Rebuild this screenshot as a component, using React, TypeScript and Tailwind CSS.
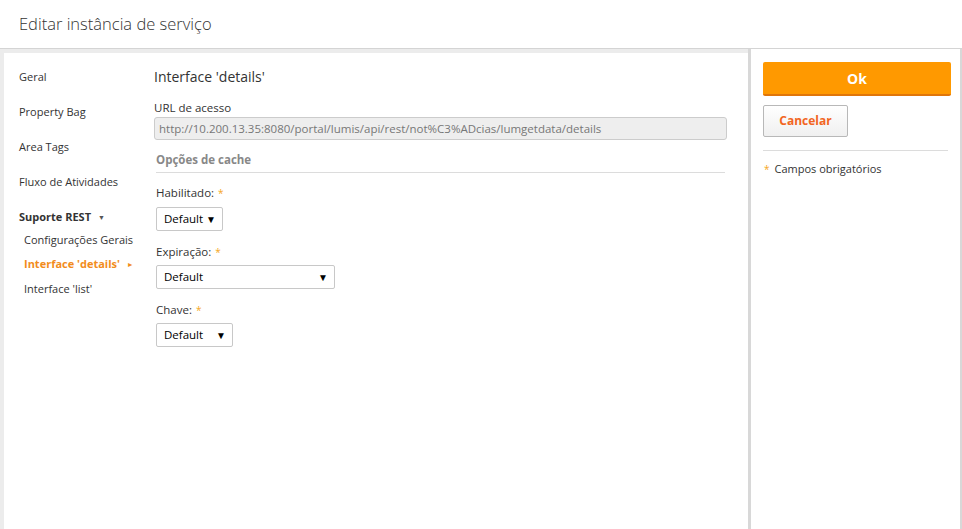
import React from 'react';

const font = { fontFamily: '"Open Sans", "Noto Sans", Arial, sans-serif' };

const Req = () => <span className="text-[#f5a623] text-[10px] align-top ml-1">*</span>;

const Select: React.FC<{ w: string }> = ({ w }) => (
  <div className={`${w} h-[24px] border border-[#c8c8c8] rounded-[2px] bg-white flex items-center justify-between pl-[7px] pr-[6px] text-[11.5px] text-black`}>
    <span>Default</span>
    <span className="text-[10px] leading-none">▼</span>
  </div>
);

const navItems = ['Geral', 'Property Bag', 'Area Tags', 'Fluxo de Atividades'];

export default function App() {
  return (
    <div className="w-[962px] h-[529px] flex flex-col bg-[#ececec] overflow-hidden" style={font}>
      <header className="h-[49px] bg-white border-b border-[#d4d4d4] flex items-center pl-[19px] shrink-0">
        <h1 className="text-[16.5px] text-[#333] font-light">Editar instância de serviço</h1>
      </header>
      <div className="flex flex-1 min-h-0">
        <div className="w-[748px] pl-[4px] pt-[4px] flex">
          <div className="flex-1 bg-white flex">
            <nav className="w-[150px] pl-[15px] pt-[15px] text-[11px] text-[#333]">
              {navItems.map((n) => (
                <div key={n} className="h-[35px] leading-[18px]">{n}</div>
              ))}
              <div className="h-[23px] leading-[18px] font-bold">
                Suporte REST <span className="text-[7px] font-normal text-[#555] ml-[4px] align-middle">▼</span>
              </div>
              <div className="pl-[5px]">
                <div className="h-[24px] leading-[18px]">Configurações Gerais</div>
                <div className="h-[25px] leading-[18px] font-bold text-[#f28c1c]">
                  Interface 'details' <span className="text-[7px] ml-[4px] align-middle">►</span>
                </div>
                <div className="h-[24px] leading-[18px]">Interface 'list'</div>
              </div>
            </nav>
            <main className="flex-1 pt-[14px] pr-[21px] text-[#333]">
              <h2 className="text-[14px] font-normal leading-[20px]">Interface 'details'</h2>
              <div className="mt-[13px] text-[11.5px] leading-[16px]">URL de acesso</div>
              <div className="mt-[1px] h-[23px] bg-[#eeeeee] border border-[#cccccc] rounded-[3px] flex items-center pl-[4px] text-[11.5px] text-[#777]">
                http://10.200.13.35:8080/portal/lumis/api/rest/not%C3%ADcias/lumgetdata/details
              </div>
              <div className="mt-[11px] ml-[2px] mr-[2px] pb-[3px] border-b border-[#dcdcdc] text-[11.5px] font-bold text-[#888] leading-[18px]">
                Opções de cache
              </div>
              <div className="pl-[2px]">
                <div className="mt-[11px] text-[11.5px] leading-[18px]">Habilitado:<Req /></div>
                <div className="mt-[5px]"><Select w="w-[67px]" /></div>
                <div className="mt-[12px] text-[11.5px] leading-[18px]">Expiração:<Req /></div>
                <div className="mt-[4px]"><Select w="w-[179px]" /></div>
                <div className="mt-[12px] text-[11.5px] leading-[18px]">Chave:<Req /></div>
                <div className="mt-[4px]"><Select w="w-[77px]" /></div>
              </div>
            </main>
          </div>
        </div>
        <div className="w-[3px] bg-[#d8d8d8]" />
        <aside className="w-[209px] bg-white pt-[13px] px-[12px]">
          <button className="w-[188px] h-[34px] bg-[#ff9900] border-b-2 border-[#e0760a] rounded-[2px] text-white font-bold text-[14px]">
            Ok
          </button>
          <button className="mt-[9px] w-[85px] h-[32px] bg-gradient-to-b from-white to-[#f0f0f0] border border-[#b8b8b8] rounded-[2px] text-[#f26522] font-bold text-[12px]">
            Cancelar
          </button>
          <div className="mt-[13px] border-t border-[#dcdcdc] pt-[10px] text-[11px] text-[#333] flex items-center">
            <span className="text-[#f5a623] text-[10px] ml-[1px] mr-[5px]">*</span>
            Campos obrigatórios
          </div>
        </aside>
        <div className="w-[2px] bg-[#d8d8d8]" />
      </div>
    </div>
  );
}
